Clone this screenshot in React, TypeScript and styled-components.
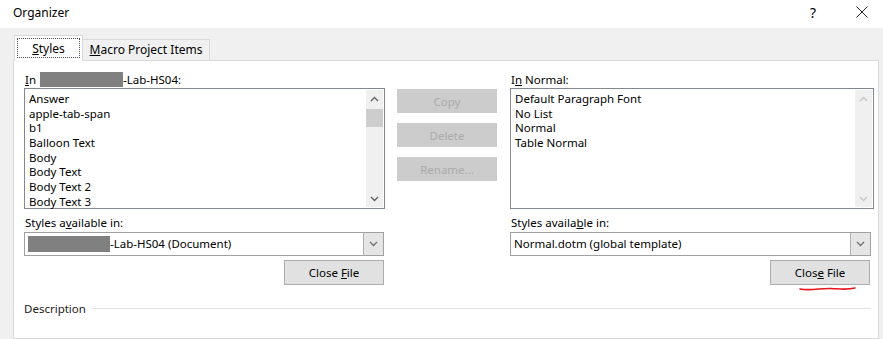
import React from 'react';
import styled, { createGlobalStyle } from 'styled-components';

const GlobalStyle = createGlobalStyle`
    html, body {
        margin: 0;
        padding: 0;
        background: #ffffff;
    }
    * {
        box-sizing: border-box;
    }
`;

const leftStyles = [
    'Answer',
    'apple-tab-span',
    'b1',
    'Balloon Text',
    'Body',
    'Body Text',
    'Body Text 2',
    'Body Text 3'
];

const rightStyles = [
    'Default Paragraph Font',
    'No List',
    'Normal',
    'Table Normal'
];

const Chevron = ({ up, color }: { up?: boolean, color: string }) => (
    <svg width="9" height="6" viewBox="0 0 9 6">
        <path
            d={up ? 'M1 5 L4.5 1.5 L8 5' : 'M1 1 L4.5 4.5 L8 1'}
            fill="none"
            stroke={color}
            strokeWidth="1.3"
        />
    </svg>
);

const App = () => {
    return (
        <Window>
            <GlobalStyle />
            <TitleBar>
                <Title>Organizer</Title>
                <TitleButton>?</TitleButton>
                <TitleButton>
                    <svg width="12" height="12" viewBox="0 0 12 12">
                        <path d="M0.5 0.5 L11.5 11.5 M11.5 0.5 L0.5 11.5" stroke="#222" strokeWidth="1" />
                    </svg>
                </TitleButton>
            </TitleBar>
            <Body>
                <TabStrip>
                    <Tab active>
                        <FocusRect><span><u>S</u>tyles</span></FocusRect>
                    </Tab>
                    <Tab><span><u>M</u>acro Project Items</span></Tab>
                </TabStrip>
                <Panel>
                    <Columns>
                        <Column width={361}>
                            <Label><u>I</u>n <Redacted width={83} />-Lab-HS04:</Label>
                            <ListBox>
                                <ListItems>
                                    {leftStyles.map(s => <ListItem key={s}>{s}</ListItem>)}
                                </ListItems>
                                <ScrollBar>
                                    <ArrowBox><Chevron up color="#606060" /></ArrowBox>
                                    <Track>
                                        <Thumb />
                                    </Track>
                                    <ArrowBox><Chevron color="#606060" /></ArrowBox>
                                </ScrollBar>
                            </ListBox>
                            <SubLabel>Styles a<u>v</u>ailable in:</SubLabel>
                            <Combo width={360}>
                                <ComboText><Redacted width={82} combo />-Lab-HS04 (Document)</ComboText>
                                <ComboButton><Chevron color="#707070" /></ComboButton>
                            </Combo>
                            <ButtonRow width={360}>
                                <CloseButton><span>Close <u>F</u>ile</span></CloseButton>
                            </ButtonRow>
                        </Column>
                        <Middle>
                            <ActionButton>Copy</ActionButton>
                            <ActionButton>Delete</ActionButton>
                            <ActionButton>Rename...</ActionButton>
                        </Middle>
                        <Column width={364}>
                            <Label>I<u>n</u> Normal:</Label>
                            <ListBox>
                                <ListItems>
                                    {rightStyles.map(s => <ListItem key={s}>{s}</ListItem>)}
                                </ListItems>
                                <ScrollBar>
                                    <ArrowBox><Chevron up color="#c5c5c5" /></ArrowBox>
                                    <Track />
                                    <ArrowBox><Chevron color="#c5c5c5" /></ArrowBox>
                                </ScrollBar>
                            </ListBox>
                            <SubLabel>Styles availa<u>b</u>le in:</SubLabel>
                            <Combo width={361}>
                                <ComboText>Normal.dotm (global template)</ComboText>
                                <ComboButton><Chevron color="#707070" /></ComboButton>
                            </Combo>
                            <ButtonRow width={360}>
                                <CloseButton>
                                    <span>Clos<u>e</u> File</span>
                                    <Scribble width="58" height="8" viewBox="0 0 58 8">
                                        <path
                                            d="M1 4 C 12 6, 22 3, 32 3.5 S 48 5, 56 3"
                                            fill="none"
                                            stroke="#e8141c"
                                            strokeWidth="1.6"
                                            strokeLinecap="round"
                                        />
                                    </Scribble>
                                </CloseButton>
                            </ButtonRow>
                        </Column>
                    </Columns>
                    <Description>
                        <DescriptionText>Description</DescriptionText>
                        <Rule />
                    </Description>
                </Panel>
            </Body>
        </Window>
    );
};

export default App;

const Window = styled.div`
    width: 883px;
    height: 339px;
    overflow: hidden;
    background-color: #f0f0f0;
    display: flex;
    flex-direction: column;
    font-family: "Noto Sans", "Liberation Sans", sans-serif;
    font-size: 11.5px;
    color: #000000;
`;

const TitleBar = styled.div`
    height: 28px;
    background-color: #ffffff;
    display: flex;
    align-items: center;
    gap: 7px;
    padding: 0 0 4px 13px;
`;

const Title = styled.div`
    flex: 1;
    font-size: 12px;
`;

const TitleButton = styled.div`
    width: 42px;
    display: flex;
    justify-content: center;
    font-size: 14px;
`;

const Body = styled.div`
    flex: 1;
    display: flex;
    flex-direction: column;
    padding: 8px 4px 0 13px;
`;

const TabStrip = styled.div`
    display: flex;
    align-items: flex-end;
    height: 25px;
    padding-left: 1px;
    position: relative;
    z-index: 1;
    margin-bottom: -1px;
`;

const Tab = styled.div<{ active?: boolean }>`
    height: ${p => p.active ? '26px' : '22px'};
    width: ${p => p.active ? '69px' : '127px'};
    background-color: ${p => p.active ? '#ffffff' : '#f0f0f0'};
    border: 1px solid #d9d9d9;
    border-bottom: ${p => p.active ? 'none' : '1px solid #d9d9d9'};
    border-left: ${p => p.active ? '1px solid #d9d9d9' : 'none'};
    display: flex;
    align-items: center;
    justify-content: center;
    font-size: 12px;
    padding: ${p => p.active ? '2px 2px 3px' : '0 0 1px'};
`;

const FocusRect = styled.div`
    width: 100%;
    height: 100%;
    border: 1px dotted #555555;
    display: flex;
    align-items: center;
    justify-content: center;
`;

const Panel = styled.div`
    flex: 1;
    background-color: #ffffff;
    border: 1px solid #d9d9d9;
    padding: 10px 0 0 10px;
`;

const Columns = styled.div`
    display: flex;
    align-items: flex-start;
`;

const Column = styled.div<{ width: number }>`
    width: ${p => p.width}px;
    display: flex;
    flex-direction: column;
`;

const Middle = styled.div`
    width: 100px;
    margin: 18px 13px 0 12px;
    display: flex;
    flex-direction: column;
    gap: 10px;
`;

const Label = styled.div`
    height: 17px;
    line-height: 15px;
    padding: 1px 0 0 1px;
    white-space: nowrap;
`;

const SubLabel = styled.div`
    height: 23px;
    line-height: 15px;
    padding: 6px 0 0 1px;
`;

const Redacted = styled.span<{ width: number, combo?: boolean }>`
    display: inline-block;
    width: ${p => p.width}px;
    height: ${p => p.combo ? 16 : 15}px;
    background-color: #808080;
    vertical-align: ${p => p.combo ? '-4px' : '-3px'};
    margin-left: ${p => p.combo ? 0 : 1}px;
`;

const ListBox = styled.div`
    height: 121px;
    border: 1px solid #828790;
    display: flex;
    background-color: #ffffff;
`;

const ListItems = styled.div`
    flex: 1;
    padding: 3px 4px;
`;

const ListItem = styled.div`
    height: 14.7px;
    line-height: 14.7px;
    white-space: nowrap;
`;

const ScrollBar = styled.div`
    width: 17px;
    margin: 1px 1px 1px 0;
    background-color: #f0f0f0;
    display: flex;
    flex-direction: column;
`;

const ArrowBox = styled.div`
    height: 17px;
    display: flex;
    align-items: center;
    justify-content: center;
`;

const Track = styled.div`
    flex: 1;
`;

const Thumb = styled.div`
    height: 18px;
    margin-top: 2px;
    background-color: #cdcdcd;
`;

const Combo = styled.div<{ width: number }>`
    width: ${p => p.width}px;
    height: 24px;
    border: 1px solid #a0a0a0;
    display: flex;
    background-color: #ffffff;
`;

const ComboText = styled.div`
    flex: 1;
    line-height: 22px;
    padding-left: 3px;
    white-space: nowrap;
`;

const ComboButton = styled.div`
    width: 20px;
    background-color: #e5e5e5;
    border-left: 1px solid #b0b0b0;
    display: flex;
    align-items: center;
    justify-content: center;
`;

const ButtonRow = styled.div<{ width: number }>`
    width: ${p => p.width}px;
    display: flex;
    justify-content: flex-end;
    margin-top: 4px;
`;

const CloseButton = styled.div`
    position: relative;
    width: 100px;
    height: 25px;
    background-color: #e1e1e1;
    border: 1px solid #adadad;
    display: flex;
    align-items: center;
    justify-content: center;
`;

const Scribble = styled.svg`
    position: absolute;
    left: 28px;
    top: 24px;
    overflow: visible;
`;

const ActionButton = styled.div`
    height: 24px;
    background-color: #cccccc;
    color: #ababab;
    display: flex;
    align-items: center;
    justify-content: center;
`;

const Description = styled.div`
    display: flex;
    align-items: center;
    gap: 6px;
    margin-top: 16px;
    width: 847px;
`;

const DescriptionText = styled.div`
    color: #222222;
`;

const Rule = styled.div`
    flex: 1;
    height: 1px;
    background-color: #e3e3e3;
`;
